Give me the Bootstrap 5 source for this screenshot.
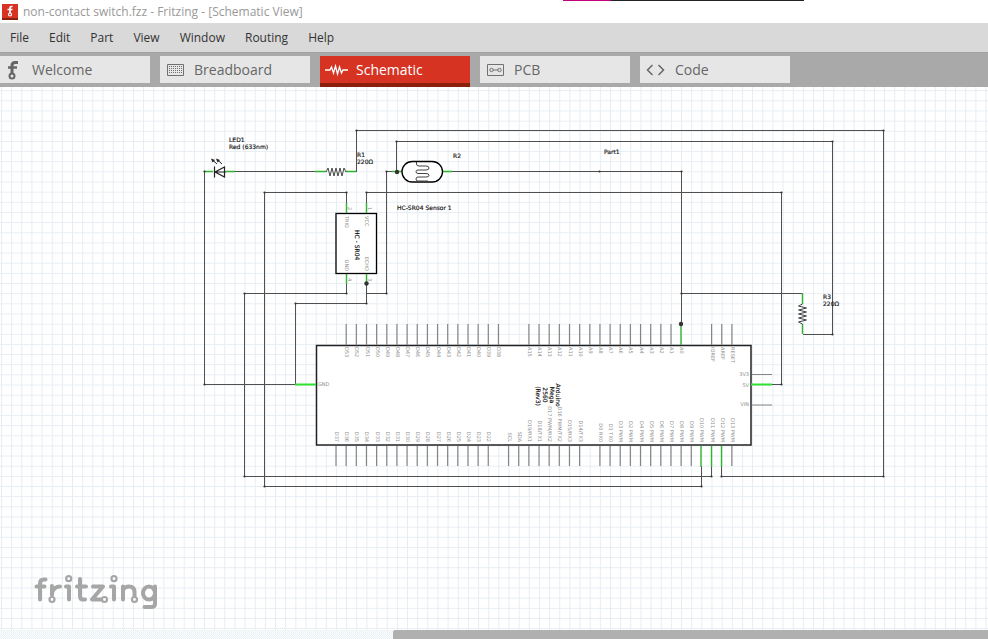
<!DOCTYPE html>
<html lang="en">
<head>
<meta charset="utf-8">
<meta name="viewport" content="width=device-width, initial-scale=1">
<title>non-contact switch.fzz - Fritzing - [Schematic View]</title>
<link href="https://cdn.jsdelivr.net/npm/bootstrap@5.3.0/dist/css/bootstrap.min.css" rel="stylesheet">
<style>
  body { font-family: "Open Sans", "Noto Sans", sans-serif; font-size: 12px; background: #fff; }
  .titlebar { height: 23px; padding-left: 2px; gap: 5px; color: #999; }
  .title-accent { top: 0; left: 57%; width: 241px; height: 1px; background: linear-gradient(90deg, #c4007a 48px, #222 48px); }
  .menubar { height: 29px; background: #d9d9d9; }
  .menubar button { border: 0; background: none; padding: 0 10px; color: #333; line-height: 28px; }
  .viewbar { height: 35px; background: #a9a9a9; border-top: 1px solid #a0a0a0; padding-top: 3px; gap: 10px; }
  .viewtab { width: 150px; height: 27px; border: 0; border-radius: 0; padding: 0 0 0 5px; background: #e6e6e6; color: #666; font-size: 14px; line-height: 27px; text-align: left; }
  .viewtab.active { height: 31px; background: #d63323; color: #fff; border-bottom: 4px solid #8a1f0b; }
  .sheet { min-height: 0; }
  .sheet svg { font-family: "DejaVu Sans", sans-serif; }
  .wire { fill: none; stroke: #505050; stroke-width: 1; shape-rendering: crispEdges; }
  .lead-green { fill: none; stroke: #2fb52f; stroke-width: 1.4; }
  .pin { stroke: #858585; stroke-width: 1.2; }
  .pinname { font-size: 5px; fill: #8c8c8c; }
  .partname { font-size: 6px; fill: #111; stroke: #111; stroke-width: .15px; }
  .scroller { height: 9px; }
  .scroll-track { flex: 393 1 0; background: conic-gradient(#e8f0f3 25%, #fdfefe 0 50%, #e8f0f3 0 75%, #fdfefe 0) 0 0 / 2px 2px; }
  .scroll-thumb { flex: 595 1 0; background: #b0b0b0; border-radius: 2px 0 0 0; }
</style>
</head>
<body>
<div class="d-flex flex-column vh-100 overflow-hidden">
  <header class="titlebar d-flex align-items-center position-relative flex-shrink-0">
    <svg width="16" height="16" viewBox="0 0 16 16" aria-hidden="true">
      <path fill="#d63323" d="M0 0h16v16H0z"/><path fill="#8a1f0b" d="M0 14h16v2H0z"/>
      <path d="M10.500 2.500H9.500Q8 2.500 8 4V9M5.500 5.500H10.500" fill="none" stroke="#fff" stroke-width="1.700"/>
      <circle cx="8" cy="10.500" r="1.500" fill="none" stroke="#fff" stroke-width="1.200"/>
    </svg>
    <span>non-contact switch.fzz - Fritzing - [Schematic View]</span>
    <div class="title-accent position-absolute"></div>
  </header>
  <nav class="menubar d-flex flex-shrink-0" aria-label="Menu">
    <button type="button">File</button><button type="button">Edit</button><button type="button">Part</button><button type="button">View</button><button type="button">Window</button><button type="button">Routing</button><button type="button">Help</button>
  </nav>
  <nav class="viewbar d-flex align-items-start flex-shrink-0" aria-label="Views">
    <button type="button" class="viewtab d-flex align-items-center gap-2">
      <svg width="19" height="20" viewBox="0 0 19 20" fill="none" stroke="#666" aria-hidden="true"><path stroke-width="3" d="M13 2.500H10Q7 2.500 7 5.500V13"/><path stroke-width="2.500" d="M3 7.500H12"/><circle cx="7" cy="16" r="2.500" stroke-width="2"/></svg>
      <span>Welcome</span></button>
    <button type="button" class="viewtab d-flex align-items-center gap-2">
      <svg width="21" height="14" viewBox="0 0 21 14" fill="none" stroke="#707070" aria-hidden="true"><path d="M2.500 1.500h16v11h-16z"/><path stroke-dasharray="1 1" d="M4 3.500h13M4 5.500h13M4 7.500h13M4 9.500h13"/></svg>
      <span>Breadboard</span></button>
    <button type="button" class="viewtab active d-flex align-items-center gap-2" aria-current="page">
      <svg width="23" height="14" viewBox="0 0 23 14" fill="none" stroke="#fff" stroke-width="1.300" aria-hidden="true"><path d="M0 7H5L6.500 4 8.500 10 10.500 3 12.500 11 14.500 4 16.500 10 18 7H23"/></svg>
      <span>Schematic</span></button>
    <button type="button" class="viewtab d-flex align-items-center gap-2">
      <svg width="21" height="14" viewBox="0 0 21 14" fill="none" stroke="#707070" aria-hidden="true"><path d="M2.500 1.500h16v11h-16z"/><circle cx="6.500" cy="7" r="1.700"/><circle cx="14.500" cy="7" r="1.700"/><path d="M8 7h5"/></svg>
      <span>PCB</span></button>
    <button type="button" class="viewtab d-flex align-items-center gap-2">
      <svg width="22" height="14" viewBox="0 0 22 14" fill="none" stroke="#666" stroke-width="1.500" aria-hidden="true"><path d="M7.500 2L2.500 7L7.500 12M13.500 2L18.500 7L13.500 12"/></svg>
      <span>Code</span></button>
  </nav>
  <main class="sheet flex-grow-1 overflow-hidden">
    <svg class="d-block w-100 h-100" role="img" aria-label="Circuit schematic">
      <defs>
        <pattern id="grid" width="10.150" height="10.150" patternUnits="userSpaceOnUse" x="1" y="90.200">
          <path d="M.5 0V10.150M0 .5H10.150" stroke="#e6edf3" fill="none"/>
        </pattern>
      </defs>
      <g transform="translate(0 -87)">
        <rect y="87" width="100%" height="100%" fill="url(#grid)"/>

        <!-- component bodies -->
        <rect x="316.500" y="345.500" width="434.500" height="99.500" fill="#fff" stroke="#222" stroke-width="1.500"/>
        <rect x="336" y="213.500" width="40.500" height="60" fill="#fff" stroke="#000" stroke-width="1.300"/>

        <g class="wire">
          <path d="M356.500 172V130.500H883.500V476.500H721.500V466"/>
          <path d="M396.500 172V141.500H832.500V334.500H802.500"/>
          <path d="M235 171.500H316M204.500 172V384.500H296"/>
          <path d="M452 171.500H681.500V324M681 293.500H802.500"/>
          <path d="M401 171.500H386.500V293.500H366.500M366.500 283V303.500H295.500V384"/>
          <path d="M346.500 203V192.500H264.500V486.500H701.500V466"/>
          <path d="M366.500 203V192.500H781.500V384.500H772"/>
          <path d="M346.500 283V293.500H244.500V476.500H711.500V466"/>
        </g>
        <g class="lead-green">
          <path d="M204 171.500H213M226 171.500H235M315 171.500H326M346 171.500H356M392 171.500H402M443 171.500H452"/>
          <path d="M346.500 203V213M366.500 203V213M346.500 274V284M366.500 274V284"/>
          <path d="M681 325V345M802.500 293V304M802.500 324V334M701 446V467M711.500 446V467M721.500 446V467"/>
          <path d="M295 384.500H316M751 384.500H772" stroke="#30e030" stroke-width="2"/>
        </g>
        <g id="joints" fill="#333"></g>
        <g fill="#333"><circle cx="397" cy="172" r="2.200"/><circle cx="366.500" cy="283.500" r="2.200"/><circle cx="681" cy="324" r="2.200"/></g>

        <!-- LED, resistors, photocell -->
        <g fill="none" stroke="#222" stroke-width="1.200">
          <path d="M214.500 166.500V177.500M224.500 167V177L215 172ZM214 172H226"/>
          <path d="M217 164L212 159.500M222 164L217 159.500" stroke-width="1"/>
          <path d="M211 158.500L215 160L212.500 162.500ZM216 158.500L220 160L217.500 162.500Z" fill="#222" stroke="none"/>
          <path d="M326 172L328 168 330 176 332 168 334 176 336 168 338 176 340 168 342 176 344 168 346 172" stroke="#444" stroke-width="1"/>
          <path d="M802.500 304L798.500 306 806.500 308 798.500 310 806.500 312 798.500 314 806.500 316 798.500 318 806.500 320 798.500 322 802.500 324" stroke="#444" stroke-width="1"/>
          <rect x="402" y="161.500" width="40.500" height="20.500" rx="10.200" fill="#fff" stroke="#000" stroke-width="1.300"/>
          <path d="M416.500 162V164Q416.500 166 419 166H426Q429 166 429 168T426 170H418Q416 170 416 171.700T418 173.500H426Q429 173.500 429 175.300T426 177H418Q416 177 416 179T418 181H428V182" stroke="#444" stroke-width="1"/>
        </g>

        <g class="partname">
          <text x="229" y="142">LED1</text><text x="229" y="149">Red (633nm)</text>
          <text x="357" y="157">R1</text><text x="357" y="164">220Ω</text>
          <text x="453" y="158">R2</text><text x="604" y="154">Part1</text>
          <text x="397" y="210">HC-SR04 Sensor 1</text>
          <text x="823" y="299">R3</text><text x="823" y="306">220Ω</text>
          <text transform="translate(355 230) rotate(90)">HC - SR04</text>
          <g text-anchor="middle">
            <text transform="translate(556 395) rotate(90)">Arduino</text>
            <text transform="translate(550 395) rotate(90)">Mega</text>
            <text transform="translate(543 395) rotate(90)">2560</text>
            <text transform="translate(536 396) rotate(90)">(Rev3)</text>
          </g>
        </g>
        <g class="pinname">
          <text transform="translate(345 216) rotate(90)">TRIG</text>
          <text transform="translate(365 216) rotate(90)">VCC</text>
          <text transform="translate(345 271) rotate(90)" text-anchor="end">GND</text>
          <text transform="translate(365 271) rotate(90)" text-anchor="end">ECHO</text>
          <text transform="translate(348 207) rotate(90)">2</text>
          <text transform="translate(368 207) rotate(90)">1</text>
          <text transform="translate(348 278) rotate(90)">4</text>
          <text transform="translate(368 278) rotate(90)">3</text>
          <text x="318" y="386">GND</text>
          <text x="749" y="376" text-anchor="end">3V3</text>
          <text x="749" y="387" text-anchor="end">5V</text>
          <text x="749" y="406" text-anchor="end">VIN</text>
        </g>
        <path class="pin" d="M752 374.500H772M752 405H772"/>
        <g id="pins"></g>

        <!-- fritzing logotype -->
        <g fill="none" stroke="#a6a6a6" stroke-width="4" stroke-linecap="round" stroke-linejoin="round">
          <path d="M45.500 579.500H44Q40 579.500 40 583.500V599.500M36.500 586.500H44.500"/>
          <path d="M52 586V595M52 593Q54 586.500 60 586.500"/>
          <path d="M66 586.500H69V599.500"/>
          <path d="M80 579V596Q80 599.500 83 599.500H85M77 586.500H86"/>
          <path d="M93 586.500H103L92 599.500H101"/>
          <path d="M111 586.500H114V599.500"/>
          <path d="M123 599.500V586.500M123 590Q125 586.500 129 586.500 134.500 586.500 134.500 592V596"/>
          <path d="M155 586.500V604Q155 607 151 607H144.500"/>
          <ellipse cx="149" cy="593" rx="6" ry="6.500"/>
        </g>
        <g fill="#fff" stroke="#a6a6a6" stroke-width="2.200">
          <circle cx="52" cy="599.500" r="2.500"/><circle cx="68.700" cy="578.700" r="2.500"/><circle cx="104.500" cy="599.500" r="2.500"/>
          <circle cx="114" cy="578.700" r="2.500"/><circle cx="134.500" cy="599.500" r="2.500"/>
        </g>
      </g>
    </svg>
  </main>
  <div class="scroller d-flex flex-shrink-0"><div class="scroll-track"></div><div class="scroll-thumb"></div></div>
</div>
<script src="https://cdn.jsdelivr.net/npm/bootstrap@5.3.0/dist/js/bootstrap.bundle.min.js"></script>
<script>
  // Arduino Mega header pins; an empty name leaves a slot free.
  const pitch = 10.15;
  const upper = "D53,D52,D51,D50,D49,D48,D47,D46,D45,D44,D43,D42,D41,D40,D39,D38,,,A15,A14,A13,A12,A11,A10,A9,A8,A7,A6,A5,A4,A3,A2,A1,A0,,,IOREF,AREF,RESET".split(",");
  const lower = "D37,D36,D35,D34,D33,D32,D31,D30,D29,D28,D27,D26,D25,D24,D23,D22,,SCL,SDA,D19/RX1,D18/TX1,D17 PWM/RX2,D16 PWM/TX2,D15/RX3,D14/TX3,,D0 RX0,D1 TX0,D3 PWM,D2 PWM,D4 PWM,D5 PWM,D6 PWM,D7 PWM,D8 PWM,D9 PWM,D10 PWM,D11 PWM,D12 PWM,D13 PWM".split(",");
  const wired = ["A0", "D10 PWM", "D11 PWM", "D12 PWM"];
  let out = "";
  function addPins(names, startX, y1, y2, textY, anchor) {
    names.forEach((name, i) => {
      if (!name) return;
      const x = startX + i * pitch;
      if (!wired.includes(name)) out += `<line class="pin" x1="${x}" x2="${x}" y1="${y1}" y2="${y2}"/>`;
      out += `<text class="pinname" text-anchor="${anchor}" transform="translate(${x - 1} ${textY}) rotate(90)">${name}</text>`;
    });
  }
  addPins(upper, 346.2, 324, 345, 347, "start");
  addPins(lower, 336, 446, 466, 442, "end");
  document.getElementById("pins").innerHTML = out;
  // Bend points of the wires
  document.getElementById("joints").innerHTML = [[356,130],[883,130],[883,476],[721,476],[396,141],[832,141],[832,334],[204,171],[204,384],[681,171],[599,171],[681,293],[386,171],[386,293],[366,303],[295,303],[346,192],[264,192],[264,486],[701,486],[366,192],[781,192],[781,384],[346,293],[244,293],[244,476],[711,476]]
    .map(([x, y]) => `<circle cx="${x + .5}" cy="${y + .5}" r="1.1"/>`).join("");
</script>
</body>
</html>
